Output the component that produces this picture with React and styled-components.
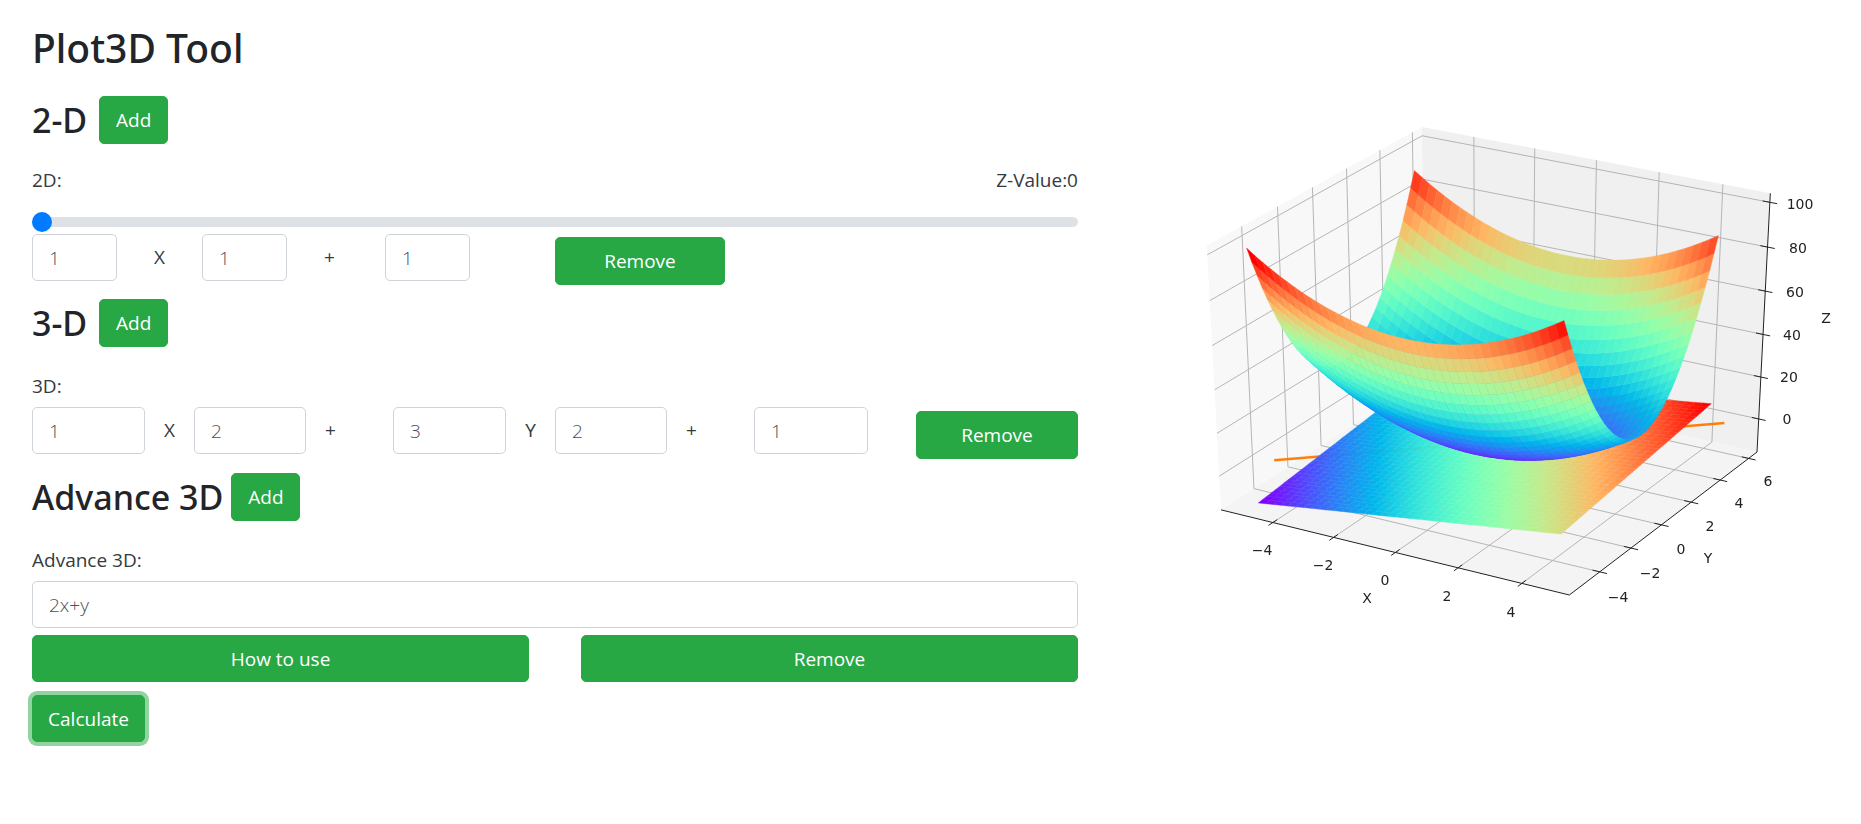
import React from 'react';
import styled, { createGlobalStyle } from 'styled-components';

// mplot3d style projection, elev 30 / azim -60 / dist 10
const LIMITS = { x: [-5.73, 5.47], y: [-5.9, 6.6], z: [-16, 104] };
const DIST = 10;

const degToRad = (d) => (d * Math.PI) / 180;
const dot = (a, b) => a[0] * b[0] + a[1] * b[1] + a[2] * b[2];
const cross = (a, b) => [
	a[1] * b[2] - a[2] * b[1],
	a[2] * b[0] - a[0] * b[2],
	a[0] * b[1] - a[1] * b[0],
];
const unit = (a) => {
	const len = Math.sqrt(dot(a, a));
	return a.map((v) => v / len);
};

const EL = degToRad(30);
const AZ = degToRad(-60);
const NORMAL = [Math.cos(EL) * Math.cos(AZ), Math.cos(EL) * Math.sin(AZ), Math.sin(EL)];
const EYE = NORMAL.map((v) => 0.5 + DIST * v);
const U = unit(cross([0, 0, 1], NORMAL));
const V = cross(NORMAL, U);

const viewOf = (p) => {
	const d = [p[0] - EYE[0], p[1] - EYE[1], p[2] - EYE[2]];
	const depth = -dot(NORMAL, d);
	return { px: dot(U, d) / depth, py: dot(V, d) / depth, depth };
};

const leftFloor = viewOf([0, 0, 0]);
const rightFloor = viewOf([1, 1, 0]);
const backTop = viewOf([0, 1, 1]);
const frontFloor = viewOf([1, 0, 0]);
const scaleX = (1757 - 1221) / (rightFloor.px - leftFloor.px);
const scaleY = (595 - 127) / (backTop.py - frontFloor.py);

const toScreen = (p) => {
	const { px, py, depth } = viewOf(p);
	return {
		x: 1221 + (px - leftFloor.px) * scaleX,
		y: 127 - (py - backTop.py) * scaleY,
		depth,
	};
};

const norm = (v, [min, max]) => (v - min) / (max - min);
const world = (x, y, z) =>
	toScreen([norm(x, LIMITS.x), norm(y, LIMITS.y), norm(z, LIMITS.z)]);
const box = (a, b, c) => toScreen([a, b, c]);
const pt = (p) => `${p.x.toFixed(1)},${p.y.toFixed(1)}`;

const rainbow = (t) => {
	const r = Math.min(1, Math.abs(2 * t - 0.5));
	const g = Math.sin(Math.PI * t);
	const b = Math.cos((Math.PI * t) / 2);
	return `rgb(${Math.round(r * 255)},${Math.round(g * 255)},${Math.round(b * 255)})`;
};

// grid is -5 .. 4.75 in steps of 0.25, the top end is left out as with np.arange
const STEP = 0.25;
const FACETS = 39;

const buildSurface = (fn) => {
	const facets = [];
	for (let i = 0; i < FACETS; i++) {
		for (let j = 0; j < FACETS; j++) {
			const x0 = -5 + STEP * i;
			const x1 = x0 + STEP;
			const y0 = -5 + STEP * j;
			const y1 = y0 + STEP;
			const corners = [[x0, y0], [x1, y0], [x1, y1], [x0, y1]];
			const zs = corners.map(([x, y]) => fn(x, y));
			const pts = corners.map(([x, y], k) => world(x, y, zs[k]));
			const avgZ = zs.reduce((s, v) => s + v, 0) / 4;
			const depth = pts.reduce((s, p) => s + p.depth, 0) / 4;
			facets.push({ points: pts.map(pt).join(' '), avgZ, depth });
		}
	}
	// colours are normalised over the facet averages, not the raw z values
	const all = facets.map((f) => f.avgZ);
	const range = [Math.min(...all), Math.max(...all)];
	return facets
		.map((f) => ({ ...f, color: rainbow(norm(f.avgZ, range)) }))
		.sort((a, b) => b.depth - a.depth);
};

const planeFacets = buildSurface((x, y) => 2 * x + y);
const bowlFacets = buildSurface((x, y) => x * x + 3 * y * y + 1);

const X_TICKS = [-4, -2, 0, 2, 4];
const Y_TICKS = [-4, -2, 0, 2, 4, 6];
const Z_TICKS = [0, 20, 40, 60, 80, 100];

const nx = (v) => norm(v, LIMITS.x);
const ny = (v) => norm(v, LIMITS.y);
const nz = (v) => norm(v, LIMITS.z);

const LABELS = [
	['−4', 1262, 550], ['−2', 1323, 565], ['0', 1385, 580], ['2', 1447, 596], ['4', 1511, 612],
	['−4', 1618, 597], ['−2', 1650, 573], ['0', 1681, 549], ['2', 1710, 526], ['4', 1739, 503], ['6', 1768, 481],
	['100', 1800, 204], ['80', 1798, 248], ['60', 1795, 292], ['40', 1792, 335], ['20', 1789, 377], ['0', 1787, 419],
	['X', 1367, 598], ['Y', 1708, 558], ['Z', 1826, 318],
];

const Segment = ({ from, to, color = '#b5b5b5', width = 1 }) => (
	<line x1={from.x} y1={from.y} x2={to.x} y2={to.y} stroke={color} strokeWidth={width} />
);

const Pane = ({ corners, fill }) => <polygon points={corners.map(pt).join(' ')} fill={fill} />;

const Surface = ({ facets }) =>
	facets.map((f, i) => (
		<polygon key={i} points={f.points} fill={f.color} stroke={f.color} strokeWidth='0.4' />
	));

const Plot = () => (
	<PlotSvg viewBox='1140 96 721 544'>
		<Pane corners={[box(0, 0, 0), box(0, 1, 0), box(0, 1, 1), box(0, 0, 1)]} fill='#f8f8f8' />
		<Pane corners={[box(0, 1, 0), box(1, 1, 0), box(1, 1, 1), box(0, 1, 1)]} fill='#f0f0f0' />
		<Pane corners={[box(0, 0, 0), box(1, 0, 0), box(1, 1, 0), box(0, 1, 0)]} fill='#f4f4f4' />

		{X_TICKS.map((t) => (
			<g key={t}>
				<Segment from={box(nx(t), 0, 0)} to={box(nx(t), 1, 0)} />
				<Segment from={box(nx(t), 1, 0)} to={box(nx(t), 1, 1)} />
				<Segment from={box(nx(t), -0.02, 0)} to={box(nx(t), 0.02, 0)} color='#222' />
			</g>
		))}
		{Y_TICKS.map((t) => (
			<g key={t}>
				<Segment from={box(1, ny(t), 0)} to={box(0, ny(t), 0)} />
				<Segment from={box(0, ny(t), 0)} to={box(0, ny(t), 1)} />
				<Segment from={box(1.02, ny(t), 0)} to={box(0.98, ny(t), 0)} color='#222' />
			</g>
		))}
		{Z_TICKS.map((t) => (
			<g key={t}>
				<Segment from={box(0, 0, nz(t))} to={box(0, 1, nz(t))} />
				<Segment from={box(0, 1, nz(t))} to={box(1, 1, nz(t))} />
				<Segment from={box(0.98, 1, nz(t))} to={box(1.02, 1, nz(t))} color='#222' />
			</g>
		))}

		<Segment from={box(0, 0, 0)} to={box(1, 0, 0)} color='#222' />
		<Segment from={box(1, 0, 0)} to={box(1, 1, 0)} color='#222' />
		<Segment from={box(1, 1, 0)} to={box(1, 1, 1)} color='#222' />

		<Segment from={world(-5, -4, 0)} to={world(4.75, 5.75, 0)} color='#ff7f0e' width={2.5} />
		<Surface facets={planeFacets} />
		<Surface facets={bowlFacets} />

		{LABELS.map(([text, x, y], i) => (
			<AxisLabel key={i} x={x} y={y}>
				{text}
			</AxisLabel>
		))}
	</PlotSvg>
);

const App = () => {
	return (
		<Page>
			<GlobalStyle />
			<Controls>
				<Title>Plot3D Tool</Title>

				<SectionHead $space={12}>
					<Heading>2-D</Heading>
					<AddButton>Add</AddButton>
				</SectionHead>
				<LabelRow>
					<FieldLabel>2D:</FieldLabel>
					<FieldLabel>Z-Value:0</FieldLabel>
				</LabelRow>
				<Slider type='range' min='0' max='100' defaultValue='0' />
				<TermRow $columns='85px 85px 85px 98px 85px 85px 170px'>
					<NumberInput defaultValue='1' />
					<Operator>X</Operator>
					<NumberInput defaultValue='1' />
					<Operator $pad={37}>+</Operator>
					<NumberInput defaultValue='1' />
					<span />
					<RowButton $top={3}>Remove</RowButton>
				</TermRow>

				<SectionHead $gap={14} $space={12}>
					<Heading>3-D</Heading>
					<AddButton>Add</AddButton>
				</SectionHead>
				<LabelRow $gap={24}>
					<FieldLabel>3D:</FieldLabel>
				</LabelRow>
				<TermRow $columns='113px 49px 112px 87px 113px 49px 112px 87px 114px 48px 162px' $top={6}>
					<NumberInput defaultValue='1' />
					<Operator>X</Operator>
					<NumberInput defaultValue='2' />
					<Operator $pad={19}>+</Operator>
					<NumberInput defaultValue='3' />
					<Operator>Y</Operator>
					<NumberInput defaultValue='2' />
					<Operator $pad={19}>+</Operator>
					<NumberInput defaultValue='1' />
					<span />
					<RowButton $top={4}>Remove</RowButton>
				</TermRow>

				<SectionHead $gap={14} $space={8}>
					<Heading>Advance 3D</Heading>
					<AddButton>Add</AddButton>
				</SectionHead>
				<LabelRow $gap={24}>
					<FieldLabel>Advance 3D:</FieldLabel>
				</LabelRow>
				<WideInput defaultValue='2x+y' />
				<SplitRow>
					<WideButton>How to use</WideButton>
					<WideButton>Remove</WideButton>
				</SplitRow>
				<FocusButton>Calculate</FocusButton>
			</Controls>
			<Plot />
		</Page>
	);
};

const GlobalStyle = createGlobalStyle`
	html, body {
		margin: 0;
		background: #fff;
	}
	body {
		font-family: 'Open Sans', 'Noto Sans', sans-serif;
		font-size: 19px;
		color: #212529;
	}
	* {
		box-sizing: border-box;
	}
`;

const Page = styled.div`
	display: flex;
	align-items: flex-start;
	justify-content: space-between;
	width: 1861px;
	height: 824px;
	padding-left: 32px;
	overflow: hidden;
`;

const Controls = styled.main`
	width: 1046px;
	padding-top: 24px;
	display: flex;
	flex-direction: column;
`;

const Title = styled.h1`
	margin: 0 0 24px;
	font-family: 'Noto Sans', sans-serif;
	font-size: 39px;
	line-height: 48px;
	font-weight: 500;
`;

const SectionHead = styled.div`
	display: flex;
	align-items: center;
	gap: ${(p) => p.$space}px;
	margin-top: ${(p) => p.$gap || 0}px;
`;

const Heading = styled.h2`
	margin: 0;
	font-family: 'Noto Sans', sans-serif;
	font-size: 34px;
	line-height: 40px;
	font-weight: 500;
`;

const LabelRow = styled.div`
	display: flex;
	justify-content: space-between;
	margin-top: ${(p) => p.$gap || 21}px;
`;

const FieldLabel = styled.span`
	line-height: 30px;
	color: #343a40;
`;

const Slider = styled.input`
	appearance: none;
	display: block;
	width: 100%;
	height: 20px;
	margin: 17px 0 0;
	background: transparent;

	&::-webkit-slider-runnable-track {
		height: 10px;
		border-radius: 5px;
		background: #dee2e6;
	}
	&::-webkit-slider-thumb {
		appearance: none;
		width: 20px;
		height: 20px;
		margin-top: -5px;
		border-radius: 50%;
		background: #007bff;
	}
`;

const TermRow = styled.div`
	display: grid;
	grid-template-columns: ${(p) => p.$columns};
	align-items: start;
	margin-top: ${(p) => (p.$top === undefined ? 2 : p.$top)}px;
`;

const Operator = styled.span`
	align-self: start;
	line-height: 47px;
	text-align: ${(p) => (p.$pad ? 'left' : 'center')};
	padding-left: ${(p) => p.$pad || 0}px;
	color: #343a40;
`;

const NumberInput = styled.input`
	width: 100%;
	height: 47px;
	padding: 0 16px;
	font: inherit;
	font-weight: 300;
	color: #495057;
	background: #fff;
	border: 1px solid #ced4da;
	border-radius: 5px;
	outline: none;
`;

const WideInput = styled(NumberInput)`
	margin-top: 6px;
`;

const Button = styled.button`
	height: 48px;
	padding: 0 15px;
	font: inherit;
	color: #fff;
	background: #28a745;
	border: 1px solid #28a745;
	border-radius: 5px;
	cursor: pointer;
`;

const AddButton = styled(Button)`
	width: 69px;
	padding: 0;
`;

const RowButton = styled(Button)`
	width: 100%;
	margin-top: ${(p) => p.$top}px;
`;

const WideButton = styled(Button)`
	height: 47px;
`;

const SplitRow = styled.div`
	display: grid;
	grid-template-columns: 497px 497px;
	justify-content: space-between;
	margin-top: 7px;
`;

const FocusButton = styled(Button)`
	align-self: flex-start;
	width: 113px;
	height: 47px;
	margin-top: 13px;
	box-shadow: 0 0 0 4px rgba(40, 167, 69, 0.5);
`;

const PlotSvg = styled.svg`
	display: block;
	width: 721px;
	height: 544px;
	margin-top: 96px;
	filter: blur(0.35px);
`;

const AxisLabel = styled.text`
	font-family: 'DejaVu Sans', sans-serif;
	font-size: 14px;
	fill: #222;
	text-anchor: middle;
	dominant-baseline: central;
`;

export default App;
